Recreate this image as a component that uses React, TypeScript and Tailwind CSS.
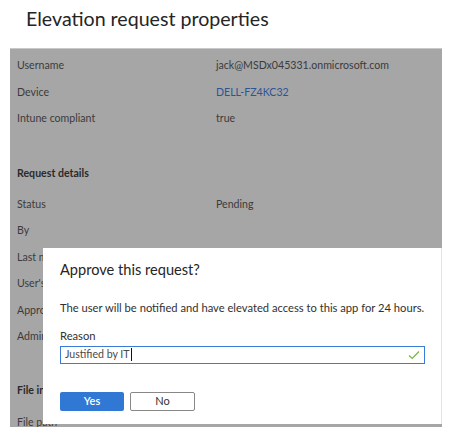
const font = { fontFamily: 'Lato, "Open Sans", sans-serif' };

type Row = { label: string; value?: string; link?: boolean };

const deviceRows: Row[] = [
  { label: 'Username', value: 'jack@MSDx045331.onmicrosoft.com' },
  { label: 'Device', value: 'DELL-FZ4KC32', link: true },
  { label: 'Intune compliant', value: 'true' },
];

const requestRows: Row[] = [
  { label: 'Status', value: 'Pending' },
  { label: 'By' },
  { label: 'Last modified' },
  { label: "User's justification" },
  { label: 'Approver justification' },
  { label: 'Admin' },
];

function PropRow({ row }: { row: Row }) {
  return (
    <div className="flex h-[26.5px] items-center text-[10.6px] text-[#3b3b3b]">
      <span className="w-[199px] shrink-0">{row.label}</span>
      {row.value && (
        <span className={row.link ? 'text-[#2c5597]' : ''}>{row.value}</span>
      )}
    </div>
  );
}

export default function App() {
  return (
    <div className="relative h-[437px] w-[450px] overflow-hidden bg-white" style={font}>
      <h1 className="pl-[26px] pt-[5px] text-[19.6px] leading-[28px] text-[#252525]">
        Elevation request properties
      </h1>

      {/* Details panel, dimmed behind the dialog */}
      <div className="ml-[10px] mt-[15px] h-[379px] w-[432px] overflow-hidden border-t border-[#c8c8c8] bg-[#a6a6a6] pl-[7px] pt-[4px]">
        {deviceRows.map((row) => (
          <PropRow key={row.label} row={row} />
        ))}

        <div className="mt-[28px] mb-[5px] flex h-[26px] items-center text-[10.6px] font-bold text-[#2a2a2a]">
          Request details
        </div>
        {requestRows.map((row) => (
          <PropRow key={row.label} row={row} />
        ))}

        <div className="mt-[27px] mb-[6px] flex h-[26px] items-center text-[10.6px] font-bold text-[#2a2a2a]">
          File info
        </div>
        <PropRow row={{ label: 'File path' }} />
      </div>

      {/* Approve dialog */}
      <div className="absolute left-[43px] top-[248px] flex h-[176px] w-[399px] flex-col border-r border-[#e3e3e3] bg-white px-[17px] pt-[11px]">
        <div className="text-[14.6px] leading-[22px] text-[#252525]">Approve this request?</div>
        <p className="mt-[19px] whitespace-nowrap text-[11.2px] leading-[16px] text-[#323130]">
          The user will be notified and have elevated access to this app for 24 hours.
        </p>

        <label className="mt-[12px] text-[11.2px] leading-[16px] text-[#323130]">Reason</label>
        <div className="mt-[2px] flex h-[18px] w-[365px] items-center justify-between border border-[#3a7bd5] pl-[4px] pr-[4px]">
          <span className="flex items-center text-[10.6px] text-[#4a4a4a]">
            Justified by IT
            <span className="ml-px h-[13px] w-px bg-[#111]" />
          </span>
          <svg width="12" height="10" viewBox="0 0 12 10" fill="none">
            <path d="M1 5.5 L4.2 8.5 L11 1.5" stroke="#7bb241" strokeWidth="1.2" />
          </svg>
        </div>

        <div className="mt-[28px] flex gap-[6px]">
          <button className="h-[19px] w-[64px] rounded-[2px] bg-[#3078d4] text-[11px] font-semibold text-white">
            Yes
          </button>
          <button className="h-[19px] w-[65px] rounded-[2px] border border-[#8a8886] bg-white text-[11px] text-[#323130]">
            No
          </button>
        </div>
      </div>
    </div>
  );
}
